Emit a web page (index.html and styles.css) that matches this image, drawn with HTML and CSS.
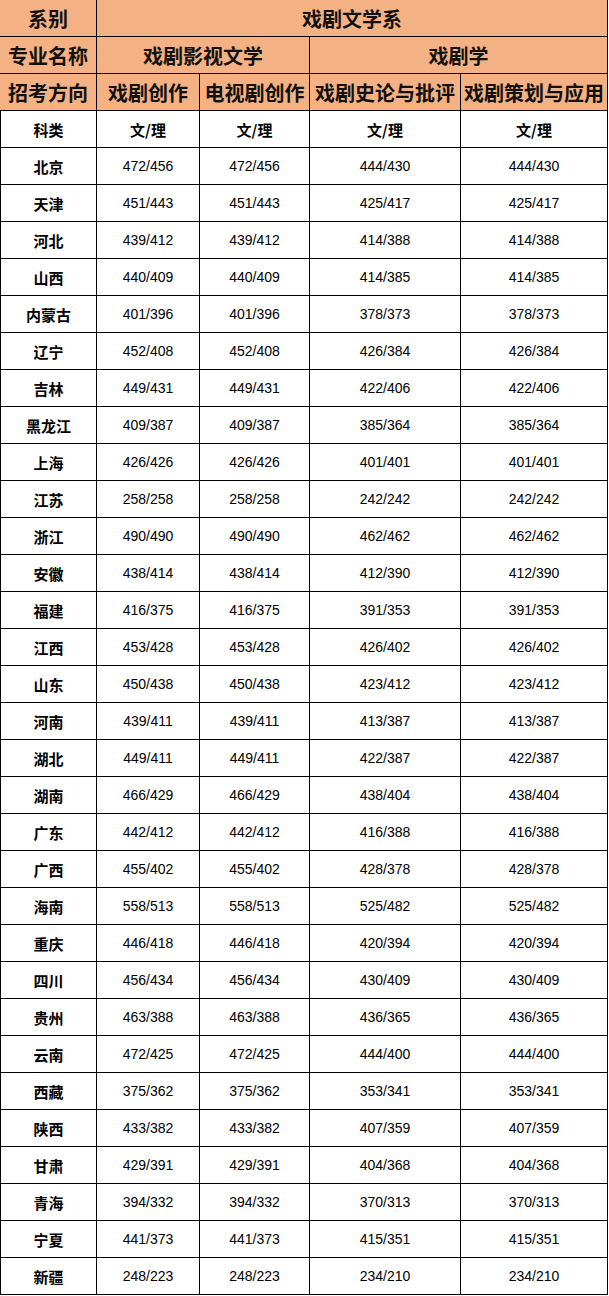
FILE: index.html
```html
<!DOCTYPE html>
<html lang="zh">
<head>
<meta charset="utf-8">
<title>戏剧文学系</title>
<link rel="stylesheet" href="styles.css">
</head>
<body>
<div class="sheet">
  <div class="c hd">系别</div>
  <div class="c hd span4">戏剧文学系</div>

  <div class="c hd">专业名称</div>
  <div class="c hd span2">戏剧影视文学</div>
  <div class="c hd span2">戏剧学</div>

  <div class="c hd">招考方向</div>
  <div class="c hd">戏剧创作</div>
  <div class="c hd">电视剧创作</div>
  <div class="c hd">戏剧史论与批评</div>
  <div class="c hd">戏剧策划与应用</div>

  <div class="c name first">科类</div>
  <div class="c name">文/理</div>
  <div class="c name">文/理</div>
  <div class="c name">文/理</div>
  <div class="c name">文/理</div>

  <div class="c name first">北京</div><div class="c num">472/456</div><div class="c num">472/456</div><div class="c num">444/430</div><div class="c num">444/430</div>
  <div class="c name first">天津</div><div class="c num">451/443</div><div class="c num">451/443</div><div class="c num">425/417</div><div class="c num">425/417</div>
  <div class="c name first">河北</div><div class="c num">439/412</div><div class="c num">439/412</div><div class="c num">414/388</div><div class="c num">414/388</div>
  <div class="c name first">山西</div><div class="c num">440/409</div><div class="c num">440/409</div><div class="c num">414/385</div><div class="c num">414/385</div>
  <div class="c name first">内蒙古</div><div class="c num">401/396</div><div class="c num">401/396</div><div class="c num">378/373</div><div class="c num">378/373</div>
  <div class="c name first">辽宁</div><div class="c num">452/408</div><div class="c num">452/408</div><div class="c num">426/384</div><div class="c num">426/384</div>
  <div class="c name first">吉林</div><div class="c num">449/431</div><div class="c num">449/431</div><div class="c num">422/406</div><div class="c num">422/406</div>
  <div class="c name first">黑龙江</div><div class="c num">409/387</div><div class="c num">409/387</div><div class="c num">385/364</div><div class="c num">385/364</div>
  <div class="c name first">上海</div><div class="c num">426/426</div><div class="c num">426/426</div><div class="c num">401/401</div><div class="c num">401/401</div>
  <div class="c name first">江苏</div><div class="c num">258/258</div><div class="c num">258/258</div><div class="c num">242/242</div><div class="c num">242/242</div>
  <div class="c name first">浙江</div><div class="c num">490/490</div><div class="c num">490/490</div><div class="c num">462/462</div><div class="c num">462/462</div>
  <div class="c name first">安徽</div><div class="c num">438/414</div><div class="c num">438/414</div><div class="c num">412/390</div><div class="c num">412/390</div>
  <div class="c name first">福建</div><div class="c num">416/375</div><div class="c num">416/375</div><div class="c num">391/353</div><div class="c num">391/353</div>
  <div class="c name first">江西</div><div class="c num">453/428</div><div class="c num">453/428</div><div class="c num">426/402</div><div class="c num">426/402</div>
  <div class="c name first">山东</div><div class="c num">450/438</div><div class="c num">450/438</div><div class="c num">423/412</div><div class="c num">423/412</div>
  <div class="c name first">河南</div><div class="c num">439/411</div><div class="c num">439/411</div><div class="c num">413/387</div><div class="c num">413/387</div>
  <div class="c name first">湖北</div><div class="c num">449/411</div><div class="c num">449/411</div><div class="c num">422/387</div><div class="c num">422/387</div>
  <div class="c name first">湖南</div><div class="c num">466/429</div><div class="c num">466/429</div><div class="c num">438/404</div><div class="c num">438/404</div>
  <div class="c name first">广东</div><div class="c num">442/412</div><div class="c num">442/412</div><div class="c num">416/388</div><div class="c num">416/388</div>
  <div class="c name first">广西</div><div class="c num">455/402</div><div class="c num">455/402</div><div class="c num">428/378</div><div class="c num">428/378</div>
  <div class="c name first">海南</div><div class="c num">558/513</div><div class="c num">558/513</div><div class="c num">525/482</div><div class="c num">525/482</div>
  <div class="c name first">重庆</div><div class="c num">446/418</div><div class="c num">446/418</div><div class="c num">420/394</div><div class="c num">420/394</div>
  <div class="c name first">四川</div><div class="c num">456/434</div><div class="c num">456/434</div><div class="c num">430/409</div><div class="c num">430/409</div>
  <div class="c name first">贵州</div><div class="c num">463/388</div><div class="c num">463/388</div><div class="c num">436/365</div><div class="c num">436/365</div>
  <div class="c name first">云南</div><div class="c num">472/425</div><div class="c num">472/425</div><div class="c num">444/400</div><div class="c num">444/400</div>
  <div class="c name first">西藏</div><div class="c num">375/362</div><div class="c num">375/362</div><div class="c num">353/341</div><div class="c num">353/341</div>
  <div class="c name first">陕西</div><div class="c num">433/382</div><div class="c num">433/382</div><div class="c num">407/359</div><div class="c num">407/359</div>
  <div class="c name first">甘肃</div><div class="c num">429/391</div><div class="c num">429/391</div><div class="c num">404/368</div><div class="c num">404/368</div>
  <div class="c name first">青海</div><div class="c num">394/332</div><div class="c num">394/332</div><div class="c num">370/313</div><div class="c num">370/313</div>
  <div class="c name first">宁夏</div><div class="c num">441/373</div><div class="c num">441/373</div><div class="c num">415/351</div><div class="c num">415/351</div>
  <div class="c name first">新疆</div><div class="c num">248/223</div><div class="c num">248/223</div><div class="c num">234/210</div><div class="c num">234/210</div>
</div>
</body>
</html>
```
FILE: styles.css
```css
html, body {
  margin: 0;
  padding: 0;
  background: #ffffff;
}

.sheet {
  display: grid;
  grid-template-columns: 97px 103px 110px 151px 147px;
  grid-auto-rows: 37px;
  width: 608px;
}

.c {
  box-sizing: border-box;
  border-right: 1px solid #000;
  border-bottom: 1px solid #000;
  display: flex;
  align-items: center;
  justify-content: center;
  color: #000;
  white-space: nowrap;
}

.hd {
  background: #f4b183;
  font-family: "Noto Sans CJK SC", sans-serif;
  font-weight: 700;
  font-size: 20px;
  color: #111;
}

.span4 { grid-column: span 4; }
.span2 { grid-column: span 2; }

.name {
  font-family: "Noto Sans CJK SC", sans-serif;
  font-weight: 700;
  font-size: 15px;
}

.first {
  border-left: 1px solid #000;
}

.num {
  font-family: "Liberation Sans", Arial, sans-serif;
  font-size: 14px;
}
```
